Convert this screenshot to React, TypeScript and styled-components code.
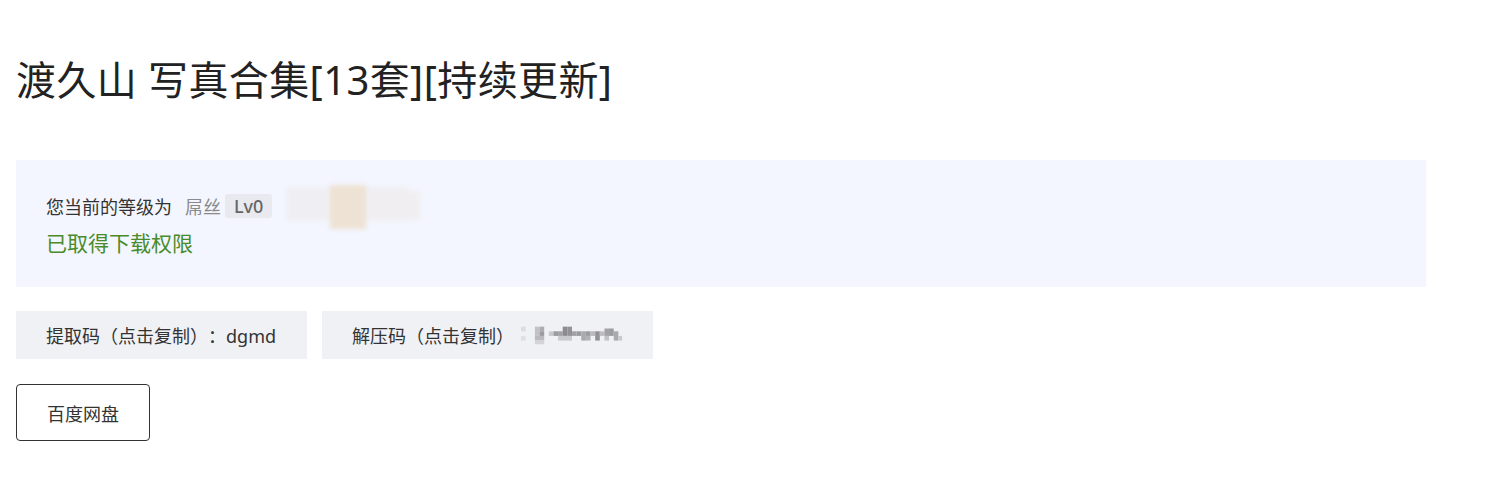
import React from 'react';
import styled, { createGlobalStyle } from 'styled-components';

const GlobalStyle = createGlobalStyle`
    html, body {
        margin: 0;
        padding: 0;
        background-color: #FFFFFF;
        font-family: "Noto Sans", "Noto Sans CJK SC", sans-serif;
        text-spacing-trim: space-all;
    }
`;

const Page = styled.main`
    padding: 56px 16px 40px;
    max-width: 1410px;
`;

const Title = styled.h1`
    margin: 0 0 56px;
    font-size: 40px;
    line-height: 48px;
    font-weight: 400;
    letter-spacing: 0.4px;
    color: #222222;
    white-space: nowrap;
`;

const InfoPanel = styled.section`
    background-color: #F3F6FE;
    padding: 34px 30px 30px;
`;

const LevelRow = styled.div`
    display: flex;
    align-items: center;
    height: 24px;
    font-size: 18px;
    color: #333333;
`;

const LevelName = styled.span`
    margin-left: 13px;
    color: #8A8A8A;
`;

const LevelBadge = styled.span`
    margin-left: 4px;
    height: 24px;
    line-height: 24px;
    padding: 0 9px;
    border-radius: 3px;
    background-color: #E8EAF0;
    color: #666666;
    font-weight: 500;
`;

const Smudge = styled.svg`
    margin-left: 6px;
    filter: blur(2px);
`;

const Granted = styled.div`
    margin-top: 11px;
    font-size: 21px;
    line-height: 28px;
    color: #4A8B2C;
`;

const CodeRow = styled.div`
    display: flex;
    gap: 15px;
    margin-top: 24px;
`;

const CodeBox = styled.div<{ $width: number }>`
    display: flex;
    align-items: center;
    width: ${p => p.$width}px;
    height: 48px;
    box-sizing: border-box;
    padding: 0 30px;
    background-color: #F0F1F5;
    font-size: 18px;
    color: #333333;
    white-space: nowrap;
    cursor: pointer;
`;

const Mosaic = styled.svg`
    margin-left: 7px;
`;

const DownloadButton = styled.button`
    margin-top: 25px;
    width: 134px;
    height: 57px;
    border: 1px solid #333333;
    border-radius: 4px;
    background-color: #FFFFFF;
    font-family: "Noto Sans", "Noto Sans CJK SC", sans-serif;
    font-size: 18px;
    color: #333333;
    cursor: pointer;
`;

const mosaicCells: [number, number, number, number, string][] = [
    [0, 3, 5, 5, '#DCDCDE'],
    [0, 13, 5, 5, '#E0E0E2'],
    [15, 3, 5, 10, '#C2C2C6'],
    [20, 3, 5, 5, '#ACACB0'],
    [20, 8, 5, 5, '#9C9CA0'],
    [15, 13, 10, 5, '#BABABE'],
    [15, 18, 10, 4, '#D4D4D8'],
    [30, 8, 5, 5, '#CACACE'],
    [35, 8, 5, 5, '#9C9C9E'],
    [40, 8, 5, 5, '#A2A2A6'],
    [45, 3, 5, 10, '#8C8C90'],
    [50, 3, 5, 10, '#929296'],
    [40, 13, 15, 5, '#CACACE'],
    [55, 8, 5, 5, '#A2A2A6'],
    [60, 8, 5, 5, '#9C9CA0'],
    [65, 8, 5, 10, '#AAAAAE'],
    [70, 8, 5, 5, '#9C9CA0'],
    [70, 13, 5, 5, '#B2B2B6'],
    [75, 8, 5, 5, '#BABABE'],
    [80, 8, 5, 10, '#929296'],
    [85, 8, 5, 5, '#BEBEC2'],
    [90, 5, 5, 8, '#A2A2A6'],
    [90, 13, 5, 5, '#C2C2C6'],
    [95, 5, 5, 8, '#9C9CA0'],
    [100, 8, 5, 10, '#AAAAAE'],
    [105, 13, 4, 5, '#CACACE'],
];

const App: React.FC = () => (
    <>
        <GlobalStyle />
        <Page>
            <Title>渡久山 写真合集[13套][持续更新]</Title>
            <InfoPanel>
                <LevelRow>
                    您当前的等级为
                    <LevelName>屌丝</LevelName>
                    <LevelBadge>Lv0</LevelBadge>
                    <Smudge width="150" height="50" viewBox="0 0 150 50">
                        <rect x="8" y="6" width="122" height="34" fill="#EFEFF3" />
                        <rect x="52" y="4" width="36" height="44" fill="#EEE2D4" />
                        <rect x="92" y="10" width="50" height="28" fill="#F0EEF0" />
                    </Smudge>
                </LevelRow>
                <Granted>已取得下载权限</Granted>
            </InfoPanel>
            <CodeRow>
                <CodeBox $width={291}>提取码（点击复制）：dgmd</CodeBox>
                <CodeBox $width={331}>
                    解压码（点击复制）
                    <Mosaic width="110" height="24" viewBox="0 0 110 24">
                        {mosaicCells.map(([x, y, w, h, c], i) => (
                            <rect key={i} x={x} y={y} width={w} height={h} fill={c} />
                        ))}
                    </Mosaic>
                </CodeBox>
            </CodeRow>
            <DownloadButton>百度网盘</DownloadButton>
        </Page>
    </>
);

export default App;
